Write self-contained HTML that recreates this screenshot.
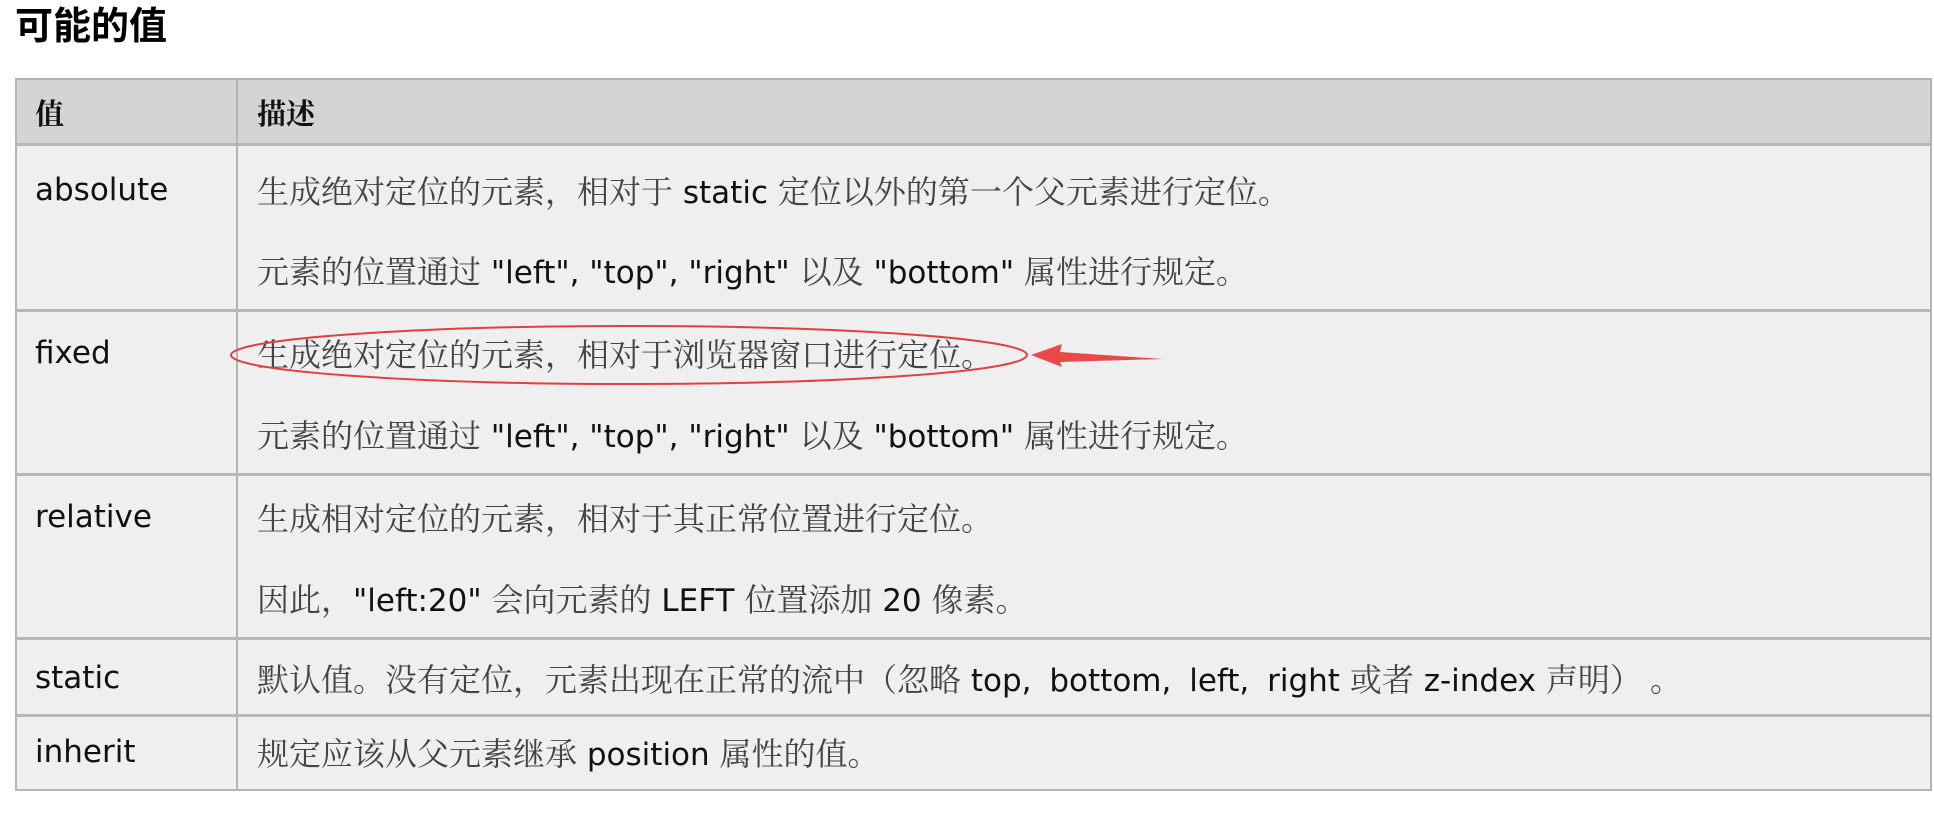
<!DOCTYPE html>
<html><head><meta charset="utf-8"><style>
body{margin:0;background:#fff;width:1934px;height:836px;position:relative;overflow:hidden;font-family:"DejaVu Sans","Liberation Sans","Noto Serif CJK SC",sans-serif;}
h2{position:absolute;left:15px;top:2px;margin:0;font:bold 38px "Liberation Sans","Noto Sans CJK SC",sans-serif;color:#000;line-height:50px;}
.b{position:absolute;}
.t{position:absolute;font-size:31px;color:#333;white-space:nowrap;line-height:38px;}
.t .c{font-family:"Noto Serif CJK SC","WenQuanYi Zen Hei",serif;color:#444;font-size:32px;}
.t b{font-weight:normal;color:#111;font-family:"DejaVu Sans",sans-serif;}
.v{font-family:"DejaVu Sans",sans-serif;color:#111;}
.h{font:bold 29px "Noto Serif CJK SC",serif;color:#111;}
</style></head><body>
<h2>可能的值</h2>
<div class="b" style="left:15px;top:78px;width:1915px;height:66px;background:#d4d4d4"></div>
<div class="b" style="left:15px;top:144px;width:1915px;height:645px;background:#efefef"></div>
<div class="b" style="left:15px;top:78px;width:1913px;height:709px;border:2px solid #b4b4b4"></div>
<div class="b" style="left:236px;top:78px;width:2px;height:711px;background:#b4b4b4"></div>
<div class="b" style="left:15px;top:143px;width:1915px;height:3px;background:#b8b8b8"></div>
<div class="b" style="left:15px;top:309px;width:1915px;height:3px;background:#b8b8b8"></div>
<div class="b" style="left:15px;top:473px;width:1915px;height:3px;background:#b8b8b8"></div>
<div class="b" style="left:15px;top:637px;width:1915px;height:3px;background:#b8b8b8"></div>
<div class="b" style="left:15px;top:714px;width:1915px;height:3px;background:#b8b8b8"></div>

<div class="t h" style="left:35px;top:92px">值</div>
<div class="t h" style="left:257px;top:92px">描述</div>

<div class="t v" style="left:35px;top:171px">absolute</div>
<div class="t" style="left:257px;top:171px"><span class="c">生成绝对定位的元素，相对于</span> <b>static</b> <span class="c">定位以外的第一个父元素进行定位。</span></div>
<div class="t" style="left:257px;top:251px"><span class="c">元素的位置通过</span> <b>"left", "top", "right"</b> <span class="c">以及</span> <b>"bottom"</b> <span class="c">属性进行规定。</span></div>

<div class="t v" style="left:35px;top:334px">fixed</div>
<div class="t" style="left:257px;top:334px"><span class="c">生成绝对定位的元素，相对于浏览器窗口进行定位。</span></div>
<div class="t" style="left:257px;top:415px"><span class="c">元素的位置通过</span> <b>"left", "top", "right"</b> <span class="c">以及</span> <b>"bottom"</b> <span class="c">属性进行规定。</span></div>

<div class="t v" style="left:35px;top:498px">relative</div>
<div class="t" style="left:257px;top:498px"><span class="c">生成相对定位的元素，相对于其正常位置进行定位。</span></div>
<div class="t" style="left:257px;top:579px"><span class="c">因此，</span><b>"left:20"</b> <span class="c">会向元素的</span> <b>LEFT</b> <span class="c">位置添加</span> <b>20</b> <span class="c">像素。</span></div>

<div class="t v" style="left:35px;top:659px">static</div>
<div class="t" style="left:257px;top:659px"><span class="c">默认值。没有定位，元素出现在正常的流中（忽略</span> <b style="word-spacing:8px">top, bottom, left, right</b> <span class="c">或者</span> <b>z-index</b> <span class="c">声明）&nbsp;。</span></div>

<div class="t v" style="left:35px;top:733px">inherit</div>
<div class="t" style="left:257px;top:733px"><span class="c">规定应该从父元素继承</span> <b>position</b> <span class="c">属性的值。</span></div>

<svg class="b" style="left:0;top:0" width="1934" height="836">
<ellipse cx="629" cy="355" rx="398" ry="29" fill="none" stroke="#e04040" stroke-width="2"/>
<path d="M1031 355 L1062 344 L1060 352 L1163 359 L1060 362 L1062 367 Z" fill="#e84a4a"/>
</svg>
</body></html>
